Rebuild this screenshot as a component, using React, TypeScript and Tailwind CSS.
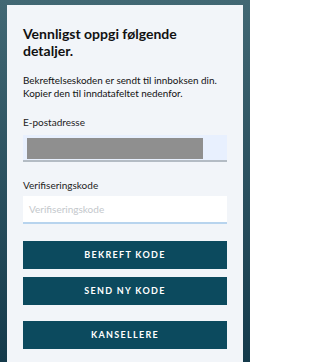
import React from "react";

export default function App() {
  return (
    <div
      className="w-[250px] h-[362px] overflow-hidden bg-gradient-to-b from-[#426874] to-[#143a4b] pl-[7px] pr-[7px] pt-[5px]"
      style={{ fontFamily: "Lato, 'Noto Sans', sans-serif" }}
    >
      <div className="bg-[#f2f5f9] h-[400px] px-[16px] pt-[20px]">
        <h1 className="text-[14px] leading-[17px] font-bold text-[#111]">
          Vennligst oppgi følgende detaljer.
        </h1>
        <p className="mt-[15px] text-[9.9px] leading-[13px] text-[#111]">
          Bekreftelseskoden er sendt til innboksen din. Kopier den til inndatafeltet nedenfor.
        </p>
        <div className="mt-[16px] text-[10px] leading-[13px] text-[#222]">E-postadresse</div>
        <div className="mt-[6px] h-[27px] bg-[#e8f0fe] border-b-2 border-[#b4bcc4] pl-[4px] pt-[3px] pr-[24px]">
          <div className="h-[21px] bg-[#8f8f8f]" />
        </div>
        <div className="mt-[17px] text-[10px] leading-[13px] text-[#222]">Verifiseringskode</div>
        <div className="mt-[4px] h-[28px] bg-white border-b-2 border-[#b8d4ee] flex items-center pl-[6px] text-[10px] text-[#c4c8cc]">
          Verifiseringskode
        </div>
        <button className="mt-[17px] w-full h-[28px] bg-[#0c4a5e] text-white text-[9px] font-bold tracking-[1.3px] flex items-center justify-center">
          BEKREFT KODE
        </button>
        <button className="mt-[8px] w-full h-[28px] bg-[#0c4a5e] text-white text-[9px] font-bold tracking-[1.3px] flex items-center justify-center">
          SEND NY KODE
        </button>
        <button className="mt-[16px] w-full h-[28px] bg-[#0c4a5e] text-white text-[9px] font-bold tracking-[1.3px] flex items-center justify-center">
          KANSELLERE
        </button>
      </div>
    </div>
  );
}
